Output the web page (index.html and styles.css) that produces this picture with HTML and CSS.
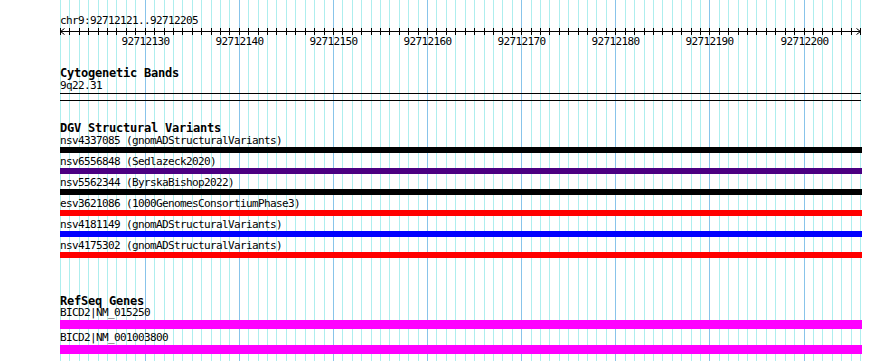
FILE: index.html
```html
<!DOCTYPE html>
<html lang="en">
<head>
    <meta charset="UTF-8">
    <meta name="viewport" content="width=device-width, initial-scale=1.0">
    <title>chr9:92712121..92712205</title>
    <link rel="stylesheet" href="styles.css">
</head>
<body>
    <div class="view">
        <svg class="grid" id="grid" width="890" height="361"></svg>

        <div class="locus">chr9:92712121..92712205</div>
        <svg class="ruler" id="ruler" width="802" height="21"></svg>

        <section class="track cyto">
            <h2 class="track-title">Cytogenetic Bands</h2>
            <div class="band-label">9q22.31</div>
        </section>

        <hr class="rule">
        <hr class="rule rule-second">

        <section class="track dgv">
            <h2 class="track-title">DGV Structural Variants</h2>
            <div class="feature">
                <div class="feature-label">nsv4337085 (gnomADStructuralVariants)</div>
                <div class="bar black"></div>
            </div>
            <div class="feature">
                <div class="feature-label">nsv6556848 (Sedlazeck2020)</div>
                <div class="bar purple"></div>
            </div>
            <div class="feature">
                <div class="feature-label">nsv5562344 (ByrskaBishop2022)</div>
                <div class="bar black"></div>
            </div>
            <div class="feature">
                <div class="feature-label">esv3621086 (1000GenomesConsortiumPhase3)</div>
                <div class="bar red"></div>
            </div>
            <div class="feature">
                <div class="feature-label">nsv4181149 (gnomADStructuralVariants)</div>
                <div class="bar blue"></div>
            </div>
            <div class="feature">
                <div class="feature-label">nsv4175302 (gnomADStructuralVariants)</div>
                <div class="bar red"></div>
            </div>
        </section>

        <section class="track genes">
            <h2 class="track-title">RefSeq Genes</h2>
            <div class="gene">
                <div class="feature-label">BICD2|NM_015250</div>
                <div class="bar magenta"></div>
            </div>
            <div class="gene">
                <div class="feature-label">BICD2|NM_001003800</div>
                <div class="bar magenta"></div>
            </div>
        </section>
    </div>
    <script src="script.js"></script>
</body>
</html>
```

FILE: styles.css
```css
* {
    margin: 0;
    padding: 0;
    box-sizing: border-box;
}
body {
    background: #fff;
    color: #000;
    font-family: "DejaVu Sans Mono", "Liberation Mono", monospace;
    font-size: 11px;
    letter-spacing: -0.62px;
}
.view {
    position: relative;
    z-index: 0;
    width: 862px;
    height: 361px;
    padding: 15px 0 0 60px;
    overflow: hidden;
}
.grid {
    position: absolute;
    top: 0;
    left: 0;
    z-index: -1;
}
.grid .minor {
    stroke: #aeeeee;
}
.grid .major {
    stroke: #88c4ea;
}
.locus {
    height: 12px;
    line-height: 12px;
}
.ruler {
    display: block;
}
.ruler line,
.ruler polyline {
    stroke: #000;
    fill: none;
}
.ruler text {
    font-family: "DejaVu Sans Mono", "Liberation Mono", monospace;
    font-size: 11px;
    letter-spacing: -0.62px;
}
.track-title {
    font-size: 12px;
    font-weight: bold;
    letter-spacing: -0.22px;
    line-height: 13px;
}
.cyto {
    margin-top: 19px;
}
.band-label {
    line-height: 11px;
}
.rule {
    border: 0;
    width: 801px;
    height: 1px;
    margin-top: 2px;
    background: #000;
}
.rule-second {
    margin-top: 6px;
}
.dgv {
    margin-top: 20px;
    padding-bottom: 1px;
}
.dgv .track-title {
    line-height: 14px;
}
.feature-label {
    height: 12px;
    line-height: 12px;
    white-space: nowrap;
}
.feature .bar {
    height: 6px;
    margin-bottom: 3px;
}
.genes {
    margin-top: 33px;
}
.gene .feature-label {
    height: 11px;
    line-height: 10px;
}
.gene .bar {
    height: 9px;
    margin: 1px 0 4px;
}
.bar {
    width: 802px;
}
.bar.black { background: #000; }
.bar.purple { background: #4b0082; }
.bar.red { background: #ff0000; }
.bar.blue { background: #0000ff; }
.bar.magenta { background: #ff00ff; }
```

FILE: script.js
```js
// bp grid + ruler for chr9:92712121..92712205, 800px across
var START = 92712121;
var END = 92712205;
var LEFT = 60;
var WIDTH = 800;
var NS = 'http://www.w3.org/2000/svg';
var bp = WIDTH / (END - START + 1);

function xAt(i) {
    return Math.round(LEFT + i * bp) + 0.5;
}

function el(name, attrs) {
    var node = document.createElementNS(NS, name);
    for (var k in attrs) node.setAttribute(k, attrs[k]);
    return node;
}

var grid = document.getElementById('grid');
var ruler = document.getElementById('ruler');

ruler.appendChild(el('line', { x1: 0.5, y1: 4.5, x2: WIDTH + 0.5, y2: 4.5 }));
ruler.appendChild(el('polyline', { points: '4.5,1.5 0.5,4.5 4.5,7.5' }));
ruler.appendChild(el('polyline', { points: (WIDTH - 3.5) + ',1.5 ' + (WIDTH + 0.5) + ',4.5 ' + (WIDTH - 3.5) + ',7.5' }));

for (var i = 0; i <= END - START + 1; i++) {
    var x = xAt(i);
    var major = (START + i) % 10 === 0;
    grid.appendChild(el('line', { x1: x, y1: 0, x2: x, y2: 361, 'class': major ? 'major' : 'minor' }));
    ruler.appendChild(el('line', { x1: x - LEFT, y1: 1, x2: x - LEFT, y2: 8 }));
    if (major) {
        var label = el('text', { x: x - LEFT, y: 18, 'text-anchor': 'middle' });
        label.textContent = START + i;
        ruler.appendChild(label);
    }
}
```
